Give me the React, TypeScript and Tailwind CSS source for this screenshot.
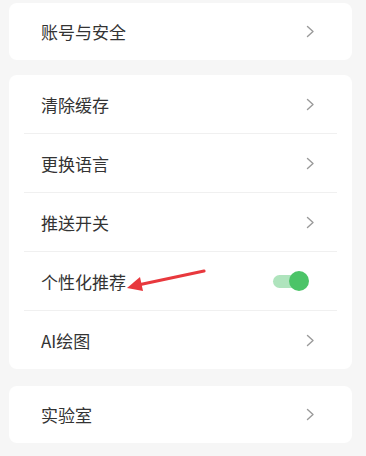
const font = { fontFamily: '"Noto Sans CJK SC", "Noto Sans", sans-serif' };

function Chevron() {
  return (
    <svg width="9" height="13" viewBox="0 0 9 13" fill="none" className="shrink-0">
      <path d="M1.5 1.5 L7 6.5 L1.5 11.5" stroke="#9a9a9a" strokeWidth="1.4" strokeLinecap="round" strokeLinejoin="round" />
    </svg>
  );
}

function Toggle() {
  return (
    <div className="relative w-[36px] h-[20px] flex items-center shrink-0">
      <div className="w-[34px] h-[13px] rounded-full bg-[#afe4bd]" />
      <div className="absolute right-0 top-0 w-[20px] h-[20px] rounded-full bg-[#4cc468]" />
    </div>
  );
}

function Row({ label, toggle, arrow }: { label: string; toggle?: boolean; arrow?: boolean }) {
  return (
    <div className="relative h-[58px] flex items-center justify-between pl-[32px] pr-[37px]">
      <span className="text-[17px] text-[#333333] leading-none">{label}</span>
      {toggle ? (
        <div className="mr-[6px]">
          <Toggle />
        </div>
      ) : (
        <Chevron />
      )}
      {arrow && (
        <svg className="absolute left-[115px] top-[16px]" width="84" height="24" viewBox="0 0 84 24">
          <line x1="80" y1="3" x2="14" y2="17" stroke="#e8383d" strokeWidth="3.2" strokeLinecap="round" />
          <path d="M3 20 L16 9 L19 23 Z" fill="#e8383d" />
        </svg>
      )}
    </div>
  );
}

function Divider() {
  return <div className="mx-[15px] h-px bg-[#f0f0f0]" />;
}

export default function App() {
  return (
    <div className="h-[456px] w-[366px] bg-[#f6f6f6] pl-[9px] pr-[14px] pt-[3px] overflow-hidden" style={font}>
      <div className="bg-white rounded-[8px]">
        <div className="h-[57px] flex items-center justify-between pl-[32px] pr-[37px]">
          <span className="text-[17px] text-[#333333] leading-none">账号与安全</span>
          <Chevron />
        </div>
      </div>
      <div className="bg-white rounded-[8px] mt-[15px]">
        <Row label="清除缓存" />
        <Divider />
        <Row label="更换语言" />
        <Divider />
        <Row label="推送开关" />
        <Divider />
        <Row label="个性化推荐" toggle arrow />
        <Divider />
        <Row label="AI绘图" />
      </div>
      <div className="bg-white rounded-[8px] mt-[17px]">
        <div className="h-[57px] flex items-center justify-between pl-[32px] pr-[37px]">
          <span className="text-[17px] text-[#333333] leading-none">实验室</span>
          <Chevron />
        </div>
      </div>
    </div>
  );
}
